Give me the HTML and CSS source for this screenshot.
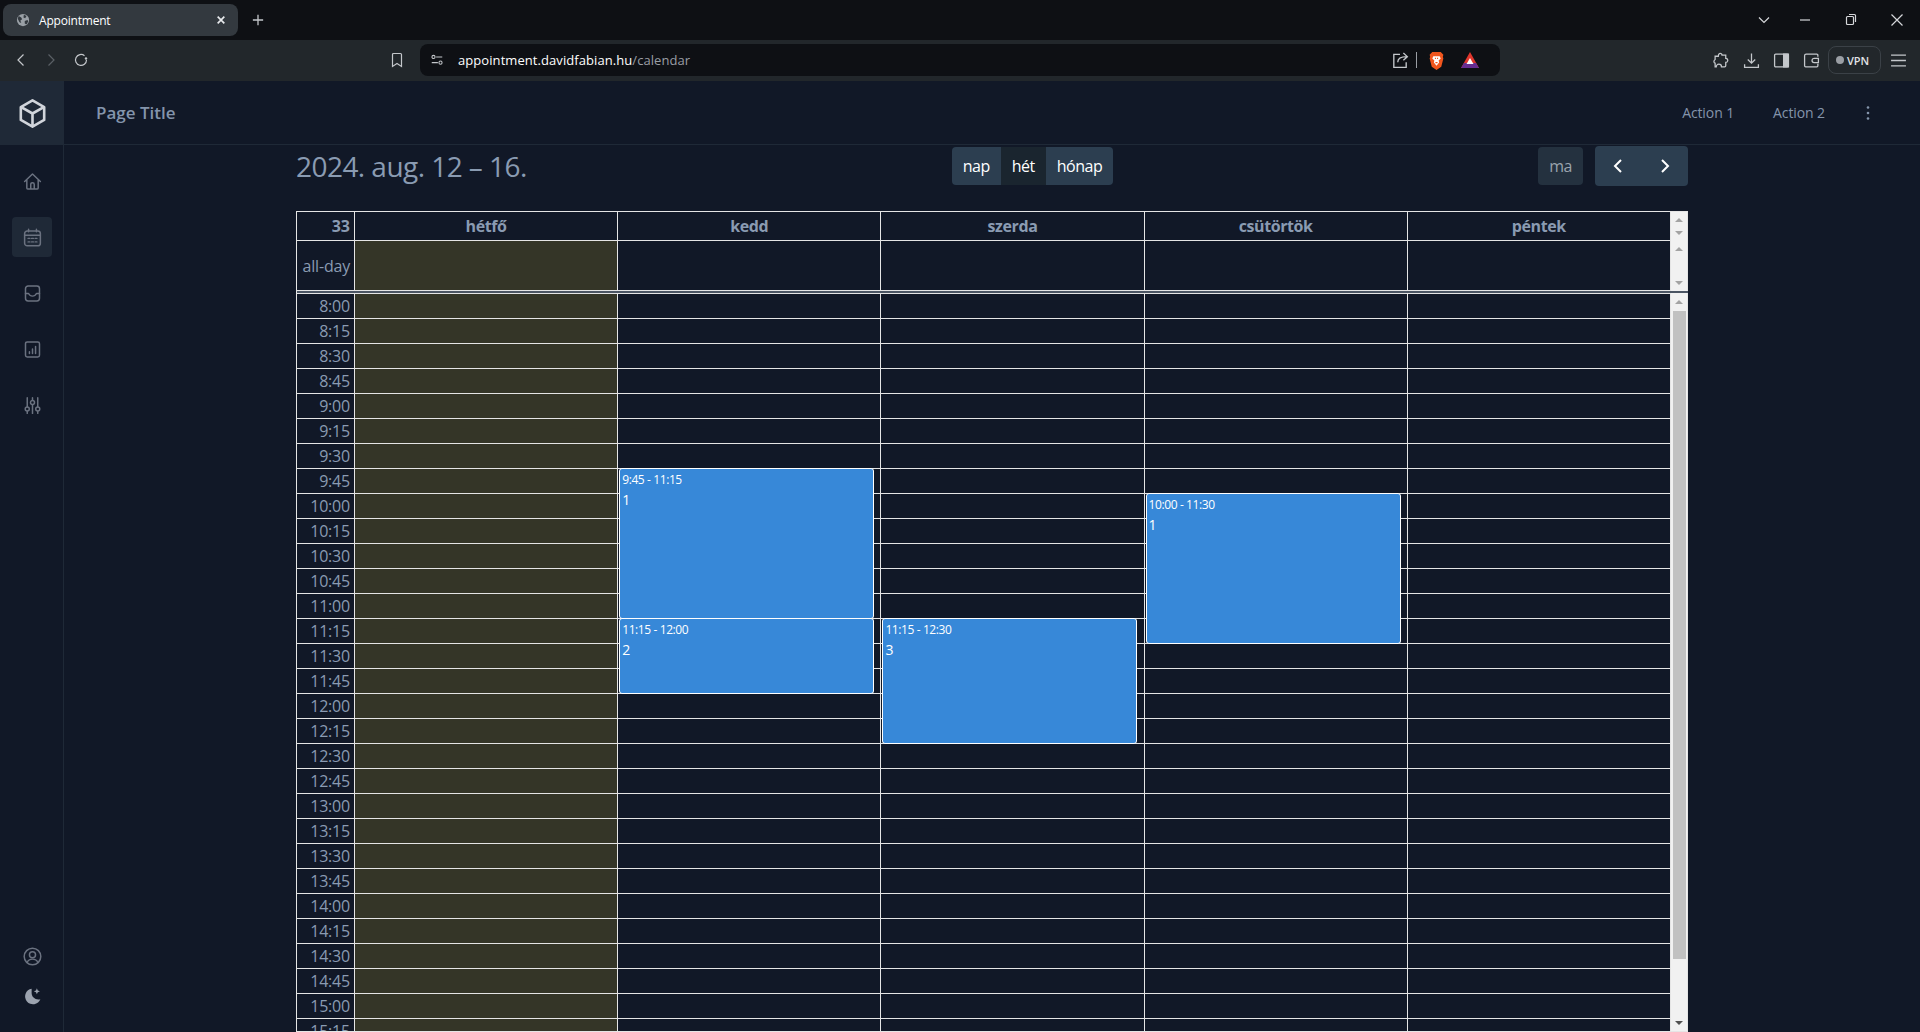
FILE: index.html
```html
<!DOCTYPE html>
<html lang="en">
<head>
    <meta charset="UTF-8">
    <meta name="viewport" content="width=device-width, initial-scale=1.0">
    <title>Appointment</title>
    <link rel="stylesheet" href="styles.css">
</head>
<body>
    <div class="tabstrip">
        <div class="tab">
            <svg class="favicon" viewBox="0 0 16 16"><circle cx="8" cy="8" r="7" fill="#9aa0a6"/><path d="M3 3.500l3 1.500 1 2-2 1.500 1 3-2-1-2-4zM9 2l3 1.500-1.500 2.500-2-1zM10 9l3-1 1 1.500-2 3.500-2-1z" fill="#33393f"/></svg>
            <span class="tab-title">Appointment</span>
            <svg class="tab-close" viewBox="0 0 12 12"><path d="M2 2l8 8M10 2l-8 8"/></svg>
        </div>
        <svg class="tab-new" viewBox="0 0 14 14"><path d="M7 1v12M1 7h12"/></svg>
        <div class="window-controls">
            <svg viewBox="0 0 14 14"><path d="M2 4.500l5 5 5-5"/></svg>
            <svg viewBox="0 0 14 14"><path d="M2 7h10"/></svg>
            <svg viewBox="0 0 14 14"><rect x="2.500" y="3.500" width="7" height="8" rx="1"/><path d="M5 1.500h5.500a1 1 0 0 1 1 1v6.500"/></svg>
            <svg viewBox="0 0 14 14"><path d="M1.500 1.500l11 11M12.500 1.500l-11 11"/></svg>
        </div>
    </div>

    <div class="toolbar">
        <div class="nav-buttons">
            <svg viewBox="0 0 16 16"><path d="M10.500 2.500L5 8l5.500 5.500"/></svg>
            <svg class="disabled" viewBox="0 0 16 16"><path d="M5.500 2.500L11 8l-5.500 5.500"/></svg>
            <svg viewBox="0 0 16 16"><path d="M13.500 8a5.500 5.500 0 1 1-2-4.300"/><circle cx="13" cy="6.500" r="1.200" fill="#c4c7cb" stroke="none"/></svg>
        </div>
        <svg class="bookmark" viewBox="0 0 16 16"><path d="M3.500 2.500a1 1 0 0 1 1-1h7a1 1 0 0 1 1 1v12l-4.500-3-4.500 3z"/></svg>
        <div class="address">
            <svg class="site-info" viewBox="0 0 16 16"><circle cx="4" cy="4.500" r="1.800"/><path d="M7 4.500h7M2 11h7"/><circle cx="12" cy="11" r="1.800"/></svg>
            <span class="url">appointment.davidfabian.hu<span class="url-path">/calendar</span></span>
            <svg class="share" viewBox="0 0 16 16"><path d="M8 3H2.500v11.500h11V10M6 10c0-3 2-5 8-5M11 1.800L14.500 5 11 8.200"/></svg>
            <span class="address-sep"></span>
            <svg class="brave" viewBox="0 0 16 18"><path d="M4 1h8l2.500 2.500-.5 2 .5 1.500-2 8L8 18l-4.500-3-2-8L2 5.500l-.5-2z" fill="#f1561d"/><path d="M5 5h6l1 2-2 2 .5 2L8 14l-2.500-3L6 9 4 7z" fill="#fff"/><path d="M6.500 7h1M8.500 7h1M7 11h2" stroke="#f1561d" fill="none"/></svg>
            <svg class="bat" viewBox="0 0 18 16"><path d="M9 0l9 16H0z" fill="#e0362c"/><path d="M0 16l3-5h12l3 5z" fill="#662d91"/><path d="M9 6l3.500 6h-7z" fill="#fff"/></svg>
        </div>
        <div class="browser-actions">
            <svg viewBox="0 0 16 16"><path d="M6 1.500c1.500-.5 2.500.5 2.500 1.500h3.500v3c1.500 0 2.500 1.500 1.500 3-.500.700-1 .800-1.500.800v3.200a1 1 0 0 1-1 1H8c0-1.500-1-2.500-2.500-2.500S3 13 3 14H2v-3.500C.500 10 .500 8 2 7V4h3c0-1 0-2 1-2.500z"/></svg>
            <svg viewBox="0 0 16 16"><path d="M8 1.500v9M4.500 7L8 10.500 11.500 7M1.500 11.500v3h13v-3"/></svg>
            <svg class="panel" viewBox="0 0 16 16"><rect x="1.500" y="2" width="13" height="12" rx="1"/><rect x="10" y="2" width="4.500" height="12" fill="#c4c7cb"/></svg>
            <svg class="wallet" viewBox="0 0 16 16"><path d="M14 4.500V3a1 1 0 0 0-1-1H3a1.500 1.500 0 0 0-1.500 1.500V13a1 1 0 0 0 1 1h10.500a1 1 0 0 0 1-1v-2M14.500 6h-4a2 2 0 0 0 0 4h4z"/></svg>
            <div class="vpn"><span class="vpn-dot"></span>VPN</div>
            <svg viewBox="0 0 16 16"><path d="M1 3h14M1 8h14M1 13h14"/></svg>
        </div>
    </div>

    <div class="app">
        <aside class="sidebar">
            <div class="logo">
                <svg viewBox="0 0 24 24"><path d="M12 2.500l8.500 4.800v9.400L12 21.500l-8.500-4.800V7.300zM3.800 7.400L12 12l8.200-4.600M12 12v9.400"/></svg>
            </div>
            <nav class="side-nav">
                <a class="side-item"><svg viewBox="0 0 24 24"><path d="M3 12l9-8.500 9 8.500M5.500 10v9.500a1 1 0 0 0 1 1h11a1 1 0 0 0 1-1V10M10 20.500v-5a2 2 0 0 1 4 0v5"/></svg></a>
                <a class="side-item active"><svg viewBox="0 0 24 24"><rect x="3" y="4.500" width="18" height="17" rx="3"/><path d="M3 9.500h18M7.500 2.500v3M16.500 2.500v3M7 13h2M11 13h2M15 13h2M7 17h2M11 17h2M15 17h2"/></svg></a>
                <a class="side-item"><svg viewBox="0 0 24 24"><rect x="4" y="3.500" width="16" height="17" rx="3"/><path d="M4 12h3.500c1 2 2.500 3 4.500 3s3.500-1 4.500-3H20"/></svg></a>
                <a class="side-item"><svg viewBox="0 0 24 24"><rect x="4" y="3.500" width="16" height="17" rx="2"/><path d="M8.500 16.500v-2M12 16.500v-5M15.500 16.500v-8"/></svg></a>
                <a class="side-item"><svg viewBox="0 0 24 24"><path d="M6 3v10.500M6 18.500V21M12 3v3M12 11v10M18 3v10.500M18 18.500V21"/><circle cx="6" cy="16" r="2.300"/><circle cx="12" cy="8.500" r="2.300"/><circle cx="18" cy="16" r="2.300"/></svg></a>
            </nav>
            <div class="side-bottom">
                <a class="side-item"><svg viewBox="0 0 24 24"><circle cx="12" cy="12" r="9.500"/><circle cx="12" cy="10" r="3.500"/><path d="M6 18.500c1-2.500 3-3.500 6-3.500s5 1 6 3.500"/></svg></a>
                <a class="side-item moon"><svg viewBox="0 0 24 24"><path d="M11 3a9 9 0 1 0 10 12c-5 1.500-10-2-10-7 0-2 0-3.500 0-5z"/><path d="M17 2.500l1 2.500 2.500 1-2.500 1-1 2.500-1-2.500-2.500-1 2.500-1z"/></svg></a>
            </div>
        </aside>

        <div class="main">
            <header class="page-header">
                <h1 class="page-title">Page Title</h1>
                <div class="page-actions">
                    <span>Action 1</span>
                    <span>Action 2</span>
                    <svg class="more" viewBox="0 0 4 16"><circle cx="2" cy="2.500" r="1.300"/><circle cx="2" cy="8" r="1.300"/><circle cx="2" cy="13.500" r="1.300"/></svg>
                </div>
            </header>

            <div class="calendar">
                <div class="cal-toolbar">
                    <h2 class="cal-title">2024. aug. 12 – 16.</h2>
                    <div class="btn-group views">
                        <button class="btn">nap</button>
                        <button class="btn btn-active">hét</button>
                        <button class="btn">hónap</button>
                    </div>
                    <div class="cal-nav">
                        <button class="btn btn-disabled">ma</button>
                        <div class="btn-group arrows">
                            <button class="btn btn-arrow"><svg viewBox="0 0 12 16"><path d="M9 2L3 8l6 6"/></svg></button>
                            <button class="btn btn-arrow"><svg viewBox="0 0 12 16"><path d="M3 2l6 6-6 6"/></svg></button>
                        </div>
                    </div>
                </div>

                <div class="cal-view">
                    <div class="cal-head">
                        <div class="cal-row head-row">
                            <div class="cell week-num">33</div>
                            <div class="cell day-name">hétfő</div>
                            <div class="cell day-name">kedd</div>
                            <div class="cell day-name">szerda</div>
                            <div class="cell day-name">csütörtök</div>
                            <div class="cell day-name">péntek</div>
                            <div class="scrollbar sb-small"><span class="sb-up"></span><span class="sb-down"></span></div>
                        </div>
                        <div class="cal-row allday-row">
                            <div class="cell time-label">all-day</div>
                            <div class="cell today"></div>
                            <div class="cell"></div>
                            <div class="cell"></div>
                            <div class="cell"></div>
                            <div class="cell"></div>
                            <div class="scrollbar sb-small"><span class="sb-up"></span><span class="sb-down"></span></div>
                        </div>
                    </div>
                    <div class="cal-divider"></div>
                    <div class="cal-body">
                        <div class="time-grid" id="time-grid"></div>
                        <div class="scrollbar sb-main">
                            <span class="sb-up"></span>
                            <span class="sb-thumb"></span>
                            <span class="sb-down sb-dark"></span>
                        </div>
                    </div>
                </div>
            </div>
        </div>
    </div>

    <script>
        const grid = document.getElementById('time-grid');
        const slotHeight = 25;
        const timeColumn = 58;
        const dayWidth = 263.2;

        // 8:00 to 15:15 in 15 minute slots
        for (let slot = 0; slot < 30; slot++) {
            const minutes = 8 * 60 + slot * 15;
            const label = `${Math.floor(minutes / 60)}:${String(minutes % 60).padStart(2, '0')}`;
            const row = document.createElement('div');
            row.classList.add('cal-row', 'slot-row');
            row.innerHTML = `<div class="cell time-label">${label}</div><div class="cell today"></div>` +
                '<div class="cell"></div>'.repeat(4);
            grid.appendChild(row);
        }

        const events = [
            { day: 1, slot: 7, slots: 6, time: '9:45 - 11:15', title: '1' },
            { day: 1, slot: 13, slots: 3, time: '11:15 - 12:00', title: '2' },
            { day: 2, slot: 13, slots: 5, time: '11:15 - 12:30', title: '3' },
            { day: 3, slot: 8, slots: 6, time: '10:00 - 11:30', title: '1' }
        ];

        events.forEach(ev => {
            const el = document.createElement('div');
            el.classList.add('event');
            el.style.left = `${timeColumn + dayWidth * ev.day + 1}px`;
            el.style.top = `${ev.slot * slotHeight - 1}px`;
            el.style.height = `${ev.slots * slotHeight + 1}px`;
            el.innerHTML = `<div class="event-time">${ev.time}</div><div class="event-title">${ev.title}</div>`;
            grid.appendChild(el);
        });
    </script>
</body>
</html>
```

FILE: styles.css
```css
* {
    box-sizing: border-box;
}
html, body {
    height: 100%;
}
body {
    margin: 0;
    display: flex;
    flex-direction: column;
    overflow: hidden;
    background-color: #111827;
    font-family: "Open Sans", "Noto Sans", sans-serif;
}
svg {
    display: block;
    fill: none;
}

/* browser chrome */
.tabstrip {
    display: flex;
    align-items: center;
    height: 40px;
    padding: 4px 3px;
    background-color: #0e1014;
}
.tab {
    display: flex;
    align-items: center;
    width: 235px;
    height: 32px;
    padding: 0 12px 0 13px;
    border-radius: 8px;
    background-color: #33393f;
    color: #fff;
    font-size: 12px;
    letter-spacing: -0.2px;
}
.favicon {
    width: 14px;
    height: 14px;
    margin-right: 9px;
}
.tab-title {
    flex: 1;
}
.tab-close {
    width: 10px;
    height: 10px;
    stroke: #e8eaed;
    stroke-width: 2;
}
.tab-new {
    width: 12px;
    height: 12px;
    margin-left: 14px;
    stroke: #c4c7cb;
    stroke-width: 1.500;
}
.window-controls {
    display: flex;
    gap: 32px;
    margin-left: auto;
    padding-right: 13px;
}
.window-controls svg {
    width: 14px;
    height: 14px;
    stroke: #d5d7da;
    stroke-width: 1.200;
}
.window-controls svg:first-child {
    margin-right: -5px;
}
.toolbar {
    display: flex;
    align-items: center;
    height: 41px;
    padding: 0 14px 1px;
    background-color: #22272b;
}
.nav-buttons {
    display: flex;
    gap: 14px;
    margin-left: -1px;
}
.toolbar svg {
    stroke: #c4c7cb;
    stroke-width: 1.200;
}
.nav-buttons svg {
    width: 16px;
    height: 16px;
}
.nav-buttons svg.disabled {
    stroke: #5b6066;
}
.bookmark {
    width: 16px;
    height: 16px;
    margin-left: 300px;
}
.address {
    display: flex;
    align-items: center;
    width: 1080px;
    height: 32px;
    margin-left: 15px;
    padding: 0 21px 0 10px;
    border-radius: 8px;
    background-color: #0e1014;
}
.site-info {
    width: 14px;
    height: 14px;
}
.url {
    flex: 1;
    margin-left: 14px;
    color: #fff;
    font-size: 13px;
    letter-spacing: 0.07px;
}
.url-path {
    color: #9a9ea4;
}
.share {
    width: 18px;
    height: 18px;
}
.address-sep {
    width: 1px;
    height: 16px;
    margin: 0 11px 0 7px;
    background-color: #9a9ea4;
}
.brave {
    width: 17px;
    height: 19px;
}
.toolbar svg.brave, .toolbar svg.bat {
    stroke: none;
}
.bat {
    width: 18px;
    height: 16px;
    margin-left: 16px;
}
.browser-actions {
    display: flex;
    align-items: center;
    margin-left: auto;
}
.browser-actions svg {
    width: 17px;
    height: 17px;
    margin-right: 13px;
}
.browser-actions svg.wallet {
    margin-right: 8px;
}
.browser-actions svg:last-child {
    margin-right: -1px;
    margin-left: 9px;
}
.vpn {
    display: flex;
    align-items: center;
    gap: 3px;
    width: 53px;
    height: 28px;
    padding-left: 7px;
    border: 1px solid #3b4147;
    border-radius: 8px;
    color: #e0e2e5;
    font-size: 11px;
    font-weight: 600;
}
.vpn-dot {
    width: 8px;
    height: 8px;
    border-radius: 50%;
    background-color: #9a9ea4;
}

/* app shell */
.app {
    display: flex;
    flex: 1;
    min-height: 0;
}
.sidebar {
    display: flex;
    flex-direction: column;
    width: 64px;
    border-right: 1px solid #1f2937;
}
.logo {
    display: flex;
    align-items: center;
    justify-content: center;
    width: 64px;
    height: 64px;
    background-color: #1f2937;
}
.logo svg {
    width: 33px;
    height: 33px;
    stroke: #d1d5db;
    stroke-width: 1.900;
    stroke-linejoin: round;
}
.side-nav {
    display: flex;
    flex-direction: column;
    gap: 16px;
    padding: 16px 12px 0;
}
.side-item {
    display: flex;
    align-items: center;
    justify-content: center;
    width: 40px;
    height: 40px;
    border-radius: 4px;
}
.side-item svg {
    width: 21px;
    height: 21px;
    stroke: #6b7280;
    stroke-width: 1.700;
    stroke-linecap: round;
    stroke-linejoin: round;
}
.side-item.active {
    background-color: #1f2937;
}
.moon svg {
    fill: #9ca3af;
    stroke: none;
}
.side-bottom {
    display: flex;
    flex-direction: column;
    margin-top: auto;
    padding: 0 12px 16px;
}
.main {
    display: flex;
    flex: 1;
    flex-direction: column;
    min-width: 0;
}
.page-header {
    display: flex;
    align-items: center;
    justify-content: space-between;
    height: 64px;
    padding: 0 50px 0 32px;
    border-bottom: 1px solid #1f2937;
    color: #8494ab;
}
.page-title {
    margin: 0;
    font-size: 17px;
    font-weight: 600;
}
.page-actions {
    display: flex;
    align-items: center;
    gap: 39px;
    font-size: 14px;
    font-weight: 500;
    letter-spacing: -0.1px;
}
.more {
    width: 4px;
    height: 16px;
    margin-left: 2px;
    fill: #8494ab;
}

/* calendar */
.calendar {
    display: flex;
    flex: 1;
    flex-direction: column;
    width: 1392px;
    min-height: 0;
    margin: 0 auto;
    padding-top: 1px;
}
.cal-toolbar {
    display: flex;
    align-items: center;
    justify-content: space-between;
    height: 40px;
    margin-bottom: 25px;
}
.cal-title {
    margin: 0;
    color: #8a9bb2;
    font-size: 28px;
    font-weight: 400;
    letter-spacing: -0.55px;
}
.btn-group {
    display: flex;
    border-radius: 4px;
    overflow: hidden;
}
.btn {
    height: 38px;
    padding: 0 11px;
    border: 0;
    border-radius: 0;
    background-color: #2c3e50;
    color: #fff;
    font-family: inherit;
    font-size: 16px;
    letter-spacing: -0.5px;
}
.btn-active {
    background-color: #1a252f;
}
.cal-nav {
    display: flex;
    align-items: center;
    justify-content: flex-end;
    gap: 12px;
}
.btn-disabled {
    padding: 0 11px;
    border-radius: 4px;
    background-color: #24313f;
    color: #9aa3ad;
}
.btn-arrow {
    display: flex;
    align-items: center;
    justify-content: center;
    width: 46.500px;
    height: 40px;
    padding: 0;
}
.btn-arrow svg {
    width: 12px;
    height: 16px;
    stroke: #fff;
    stroke-width: 2;
}
.cal-view {
    display: flex;
    flex: 1;
    flex-direction: column;
    min-height: 0;
    border-left: 1px solid #e5e5e5;
    border-bottom: 1px solid #e5e5e5;
    overflow: hidden;
}
.cal-head {
    border-top: 1px solid #e5e5e5;
}
.cal-row {
    display: grid;
    grid-template-columns: 58px repeat(5, 263.2px) 17px;
}
.head-row {
    height: 29px;
}
.allday-row {
    height: 50px;
}
.slot-row {
    grid-template-columns: 58px repeat(5, 263.2px);
    height: 25px;
}
.cell {
    border-right: 1px solid #e5e5e5;
    border-bottom: 1px solid #e5e5e5;
    color: #8a9bb2;
    font-size: 16px;
}
.week-num {
    padding-right: 4px;
    font-weight: 700;
    line-height: 28px;
    text-align: right;
}
.day-name {
    font-weight: 700;
    letter-spacing: -0.4px;
    line-height: 28px;
    text-align: center;
}
.time-label {
    height: 25px;
    padding-right: 4px;
    letter-spacing: -0.2px;
    line-height: 25px;
    text-align: right;
}
.allday-row .time-label {
    height: 50px;
    line-height: 50px;
}
.today {
    background-color: rgba(255, 220, 40, 0.15);
}
.cal-divider {
    height: 2px;
    background-color: #4b5563;
}
.cal-body {
    display: flex;
    flex: 1;
    min-height: 0;
}
.time-grid {
    position: relative;
    flex: 1;
    border-top: 1px solid #e5e5e5;
    overflow: hidden;
}
.event {
    position: absolute;
    width: 255px;
    padding: 1px 2px 0;
    border: 1px solid #fff;
    border-radius: 3px;
    background-color: #3788d8;
    color: #fff;
}
.event-time {
    font-size: 12px;
    letter-spacing: -0.4px;
    line-height: 20px;
}
.event-title {
    font-size: 14px;
    line-height: 20px;
}

/* drawn scrollbars, the reference shows the light default ones */
.scrollbar {
    display: flex;
    flex-direction: column;
    align-items: center;
    justify-content: space-between;
    border-right: 1px solid #e5e5e5;
    background-color: #f1f1f1;
}
.sb-small {
    padding: 6px 0;
}
.sb-main {
    width: 17px;
    padding: 7px 0 6px;
}
.sb-up, .sb-down {
    width: 0;
    height: 0;
    border-left: 4px solid transparent;
    border-right: 4px solid transparent;
}
.sb-up {
    border-bottom: 4px solid #a3a3a3;
}
.sb-down {
    border-top: 4px solid #a3a3a3;
}
.sb-dark {
    border-top-color: #505050;
}
.sb-thumb {
    flex: 1;
    width: 13px;
    margin: 7px 0 62px;
    background-color: #c1c1c1;
}
```
